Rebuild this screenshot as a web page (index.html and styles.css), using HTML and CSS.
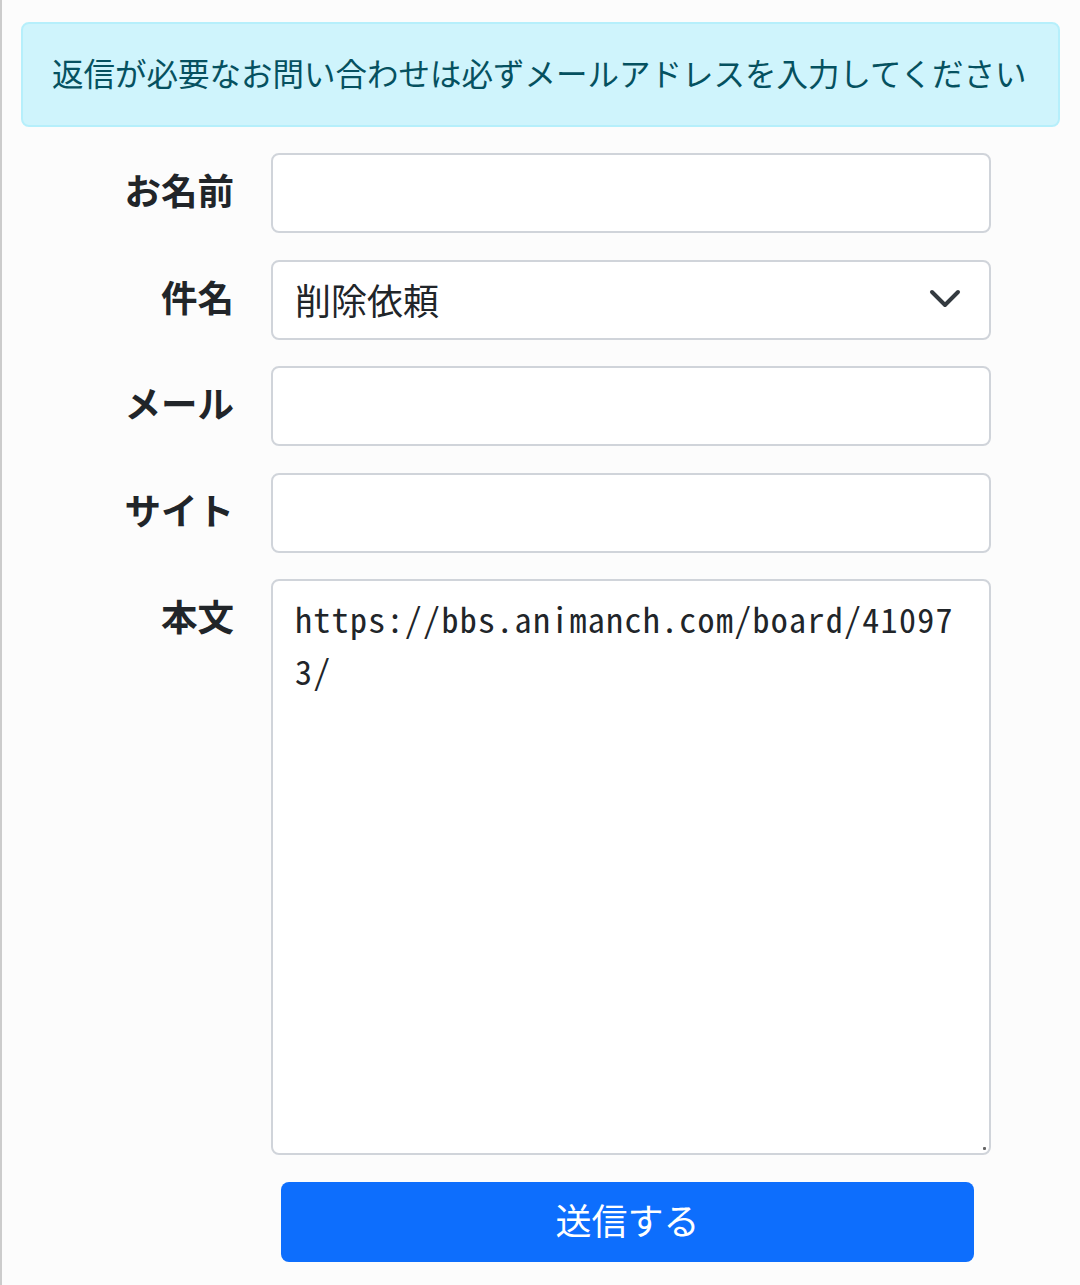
FILE: index.html
```html
<!DOCTYPE html>
<html lang="ja">
<head>
<meta charset="utf-8">
<title>お問い合わせ</title>
<link rel="stylesheet" href="styles.css">
</head>
<body>
<div class="page">
  <div class="alert">返信が必要なお問い合わせは必ずメールアドレスを入力してください</div>
  <form class="form">
    <label class="label" for="name">お名前</label>
    <input class="control" id="name" type="text">

    <label class="label" for="subject">件名</label>
    <div class="control select" id="subject">
      <span>削除依頼</span>
      <svg class="chev" width="32" height="20" viewBox="0 0 32 20"><path d="M3 3 L16 16 L29 3" fill="none" stroke="#343a40" stroke-width="4" stroke-linecap="round" stroke-linejoin="round"/></svg>
    </div>

    <label class="label" for="mail">メール</label>
    <input class="control" id="mail" type="text">

    <label class="label" for="site">サイト</label>
    <input class="control" id="site" type="text">

    <label class="label" for="body">本文</label>
    <div class="area-wrap">
      <textarea class="control textarea" id="body">https://bbs.animanch.com/board/410973/</textarea>
      <span class="grip"></span>
    </div>

    <div class="spacer"></div>
    <button class="submit" type="button">送信する</button>
  </form>
</div>
</body>
</html>
```

FILE: styles.css
```css
html, body {
  margin: 0;
  padding: 0;
}
body {
  background: #fcfcfc;
  font-family: "Noto Sans CJK JP", "Noto Sans", sans-serif;
  color: #212529;
}
.page {
  border-left: 2px solid #cccccc;
  min-height: 1285px;
  box-sizing: border-box;
  padding: 22px 20px 0 19px;
}
.alert {
  box-sizing: border-box;
  height: 105px;
  background: #cff4fc;
  border: 2px solid #b6effb;
  border-radius: 8px;
  color: #055160;
  font-size: 31.5px;
  display: flex;
  align-items: center;
  padding: 0 0 6px 29px;
  white-space: nowrap;
}
.form {
  display: grid;
  grid-template-columns: 213px 720px;
  column-gap: 37px;
  row-gap: 26.5px;
  margin-top: 26px;
}
.label {
  box-sizing: border-box;
  font-weight: bold;
  font-size: 36.5px;
  text-align: right;
  display: flex;
  align-items: center;
  justify-content: flex-end;
  height: 80px;
  padding-bottom: 7px;
}
.control {
  box-sizing: border-box;
  height: 80px;
  width: 720px;
  margin: 0;
  border: 2px solid #d0d4da;
  border-radius: 8px;
  background: #ffffff;
  font-family: "Noto Sans CJK JP", sans-serif;
  font-size: 36px;
  color: #212529;
  padding: 0 22px;
  outline: none;
}
.select {
  display: flex;
  align-items: center;
  justify-content: space-between;
  padding-right: 28px;
  padding-bottom: 2px;
}
.chev {
  display: block;
}
.area-wrap {
  position: relative;
  height: 576px;
}
.textarea {
  display: block;
  height: 576px;
  resize: none;
  padding: 12px 22px;
  font-family: "Noto Sans Mono CJK JP", "Noto Sans Mono", "DejaVu Sans Mono", monospace;
  font-size: 34px;
  letter-spacing: 1.3px;
  line-height: 52px;
  word-break: break-all;
  overflow: hidden;
}
.grip {
  position: absolute;
  right: 5px;
  bottom: 5px;
  width: 3px;
  height: 3px;
  background: #666;
  border-radius: 1px;
}
.spacer {
  height: 80px;
}
.submit {
  box-sizing: border-box;
  height: 80px;
  width: 693px;
  margin-left: 10px;
  border: none;
  border-radius: 8px;
  background: #0d6efd;
  color: #ffffff;
  font-family: "Noto Sans CJK JP", sans-serif;
  font-size: 36px;
  padding: 0 0 5px 0;
}
```
